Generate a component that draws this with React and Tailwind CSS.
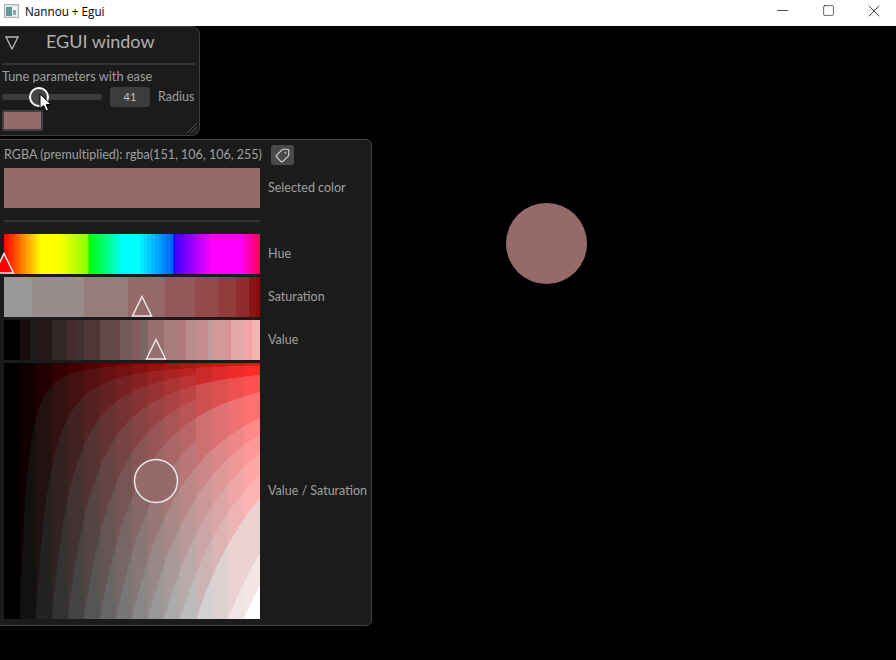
import React from 'react';
import { Minus, Square, X, Tag } from 'lucide-react';

const SWATCH = '#976a6a';

const satBands = [
  [0, 28, '#999999'], [28, 80, '#998c8c'], [80, 124, '#977c7c'], [124, 161, '#976a6a'],
  [161, 191, '#945858'], [191, 214, '#944a4a'], [214, 232, '#933c3c'], [232, 245, '#902c2c'],
  [245, 252, '#8c1616'], [252, 256, '#8a0c0c'],
];

const valBands = [
  [0, 16, '#000000'], [16, 26, '#180c0c'], [26, 32, '#1c1c1c'], [32, 48, '#261818'],
  [48, 63, '#332626'], [63, 72, '#472b2b'], [72, 80, '#3e3232'], [80, 96, '#523636'],
  [96, 112, '#634a4a'], [112, 116, '#6a4646'], [116, 128, '#745a5a'], [128, 137, '#865c5c'],
  [137, 144, '#7b6666'], [144, 160, '#986e6e'], [160, 176, '#a97c7c'], [176, 182, '#b47878'],
  [182, 193, '#b88c8c'], [193, 204, '#c48c8c'], [204, 208, '#c09c9c'], [208, 224, '#d49a9a'],
  [224, 227, '#e08e8e'], [227, 240, '#e4a8a8'], [240, 248, '#f4a4a4'], [248, 256, '#f8b4b4'],
];

const hueStops = [
  [0, 255, 0, 0], [37, 255, 255, 0], [54, 255, 255, 0], [84, 140, 255, 0], [85, 0, 255, 0],
  [119, 0, 255, 255], [134, 0, 255, 255], [169, 0, 96, 255], [170, 0, 0, 255], [171, 64, 0, 255],
  [208, 255, 0, 255], [236, 255, 0, 255], [256, 255, 0, 80],
];

// in the bright columns several bands collapse into one
const gLevels = [0, 16, 42, 42, 80, 80, 112, 112, 136, 152, 166, 180, 210, 210, 230, 255];

const quant = (v) => Math.round(v / 17) * 17;

function hueAt(x) {
  for (let i = 0; i < hueStops.length - 1; i++) {
    const a = hueStops[i];
    const b = hueStops[i + 1];
    if (x <= b[0]) {
      const t = (x - a[0]) / (b[0] - a[0]);
      const c = [1, 2, 3].map((n) => quant(a[n] + (b[n] - a[n]) * t));
      return `rgb(${c[0]},${c[1]},${c[2]})`;
    }
  }
  return '#ff0050';
}

function squareColor(x, y) {
  const rBand = Math.min(15, Math.floor(x * 16));
  const k = Math.min(15, Math.floor(x * Math.pow(y, 0.45) * 16));
  let r = rBand * 17;
  const g = rBand >= 12 ? gLevels[k] : k * 17;
  if (k === 12 || k === 13) r = Math.min(r, 235);
  if (k === 14) r = Math.min(r, 245);
  return `rgb(${Math.max(r, g)},${g},${g})`;
}

function buildSquare() {
  const paths = {};
  for (let row = 0; row < 256; row++) {
    const y = (row + 0.5) / 256;
    let start = 0;
    let prev = null;
    for (let col = 0; col <= 256; col++) {
      const key = col < 256 ? squareColor((col + 0.5) / 256, y) : null;
      if (key !== prev) {
        if (prev) {
          paths[prev] = (paths[prev] || '') + `M${start} ${row}h${col - start}v1h-${col - start}z`;
        }
        prev = key;
        start = col;
      }
    }
  }
  return Object.entries(paths);
}

const squarePaths = buildSquare();

function BandStrip({ bands }) {
  return (
    <svg width="256" height="40" className="block" shapeRendering="crispEdges">
      {bands.map(([a, b, c]) => (
        <rect key={a} x={a} y="0" width={b - a} height="40" fill={c} />
      ))}
    </svg>
  );
}

function HueStrip() {
  const cols = [];
  for (let x = 0; x < 256; x++) cols.push(x);
  return (
    <svg width="256" height="40" className="block" shapeRendering="crispEdges">
      {cols.map((x) => (
        <rect key={x} x={x} y="0" width="1" height="40" fill={hueAt(x + 0.5)} />
      ))}
    </svg>
  );
}

function Marker({ left, fill }) {
  return (
    <svg width="24" height="24" className="absolute bottom-0" style={{ left: left - 12 }}>
      <path d="M12 3.5 L21.5 23 L2.5 23 Z" fill={fill} stroke="#e6e6e6" strokeWidth="1.5" />
    </svg>
  );
}

function Row({ label, children, rowClass = 'h-10' }) {
  return (
    <div className={`flex items-center gap-2 ${rowClass}`}>
      <div className="relative w-[256px] h-full shrink-0">{children}</div>
      <span className="whitespace-nowrap">{label}</span>
    </div>
  );
}

function Cursor() {
  return (
    <svg width="14" height="20" viewBox="0 0 14 20" className="absolute left-[39px] top-[67px]">
      <path d="M1 1 L1 15.5 L4.6 12.4 L7 18 L9.5 17 L7.2 11.6 L12 11.4 Z" fill="#fff" stroke="#000" strokeWidth="1" />
    </svg>
  );
}

function TitleBar() {
  return (
    <div className="h-[26px] pb-[5px] bg-white flex items-center text-black shrink-0">
      <svg width="16" height="14" viewBox="0 0 16 14" className="ml-[4px] mr-[5px]">
        <rect x="0.5" y="0.5" width="14" height="13" fill="#dfe7ea" stroke="#aab4b8" />
        <rect x="2" y="3" width="6" height="9" fill="#5f9a9c" />
        <rect x="8" y="3" width="5" height="9" fill="#f2f6f7" />
        <rect x="9" y="6" width="3" height="5" fill="#8aa7a8" />
      </svg>
      <span className="text-[11.7px] font-['Open_Sans','Noto_Sans',sans-serif]">Nannou + Egui</span>
      <div className="ml-auto mr-[-1px] flex items-center">
        <div className="w-[45px] flex justify-center"><Minus size={17} strokeWidth={1} /></div>
        <div className="w-[46px] flex justify-center"><Square size={13} strokeWidth={1.1} /></div>
        <div className="w-[46px] flex justify-center"><X size={20} strokeWidth={0.9} /></div>
      </div>
    </div>
  );
}

function ParamsWindow() {
  return (
    <div className="absolute left-[-1px] top-0 w-[201px] h-[110px] bg-[#1b1b1b] border border-[#3c3c3c] rounded-lg rounded-tl-none rounded-bl-none pl-[2px] pr-[4px] flex flex-col">
      <div className="h-[36px] flex items-center shrink-0 relative">
        <svg width="14" height="14" viewBox="0 0 14 14" className="ml-[3px] mt-[-5px]">
          <path d="M1 1 H13 L7 13 Z" fill="none" stroke="#b4b4b4" strokeWidth="1.3" />
        </svg>
        <span className="absolute left-[44px] top-[6px] text-[18px] text-[#b0b0b0] font-['Lato',sans-serif] whitespace-nowrap">EGUI window</span>
      </div>
      <div className="h-[2px] bg-[#333333] shrink-0" />
      <div className="mt-[3px] text-[12.8px] leading-[16px] whitespace-nowrap">Tune parameters with ease</div>
      <div className="mt-[3px] h-[20px] flex items-center">
        <div className="relative w-[100px] h-[6px] rounded-full bg-[#3c3c3c]">
          <div className="absolute left-[27px] top-[-7px] w-[20px] h-[20px] rounded-full bg-[#444444] border-2 border-white" />
        </div>
        <div className="ml-2 w-[40px] h-[20px] rounded-[3px] bg-[#3c3c3c] flex items-center justify-center text-[11px] text-[#c0c0c0]">41</div>
        <span className="ml-2 whitespace-nowrap">Radius</span>
      </div>
      <div className="mt-[3px] w-[41px] h-[21px] border-2 border-[#404040] rounded-[2px] bg-[#976a6a]" />
      <svg width="12" height="12" className="absolute right-[1px] bottom-[1px]">
        <path d="M1 11 L11 1 M5 11 L11 5 M9 11 L11 9" stroke="#555555" strokeWidth="1" />
      </svg>
    </div>
  );
}

function ColorWindow() {
  return (
    <div className="absolute left-[-1px] top-[113px] w-[373px] h-[487px] bg-[#1b1b1b] border border-[#444444] rounded-md rounded-tl-none rounded-bl-none pl-[4px] pt-[5px] flex flex-col">
      <div className="h-[20px] flex items-center gap-[8px] whitespace-nowrap">
        <span className="w-[259px] tracking-[0.02px]">RGBA (premultiplied): rgba(151, 106, 106, 255)</span>
        <div className="w-[23px] h-[20px] rounded-[3px] bg-[#4a4a4a] flex items-center justify-center">
          <Tag size={15} strokeWidth={1.8} color="#d8d8d8" className="rotate-90" />
        </div>
      </div>
      <div className="mt-[3px]">
        <Row label="Selected color">
          <div className="w-full h-full bg-[#976a6a]" />
        </Row>
      </div>
      <div className="mt-[12px] w-[256px] h-[2px] bg-[#333333]" />
      <div className="mt-[12px] flex flex-col gap-[3px]">
        <Row label="Hue">
          <HueStrip />
          <Marker left={0} fill="#ff0000" />
        </Row>
        <Row label="Saturation">
          <BandStrip bands={satBands} />
          <Marker left={138} fill="none" />
        </Row>
        <Row label="Value">
          <BandStrip bands={valBands} />
          <Marker left={152} fill="none" />
        </Row>
        <Row label="Value / Saturation" rowClass="h-[256px]">
          <svg width="256" height="256" className="block" shapeRendering="crispEdges">
            {squarePaths.map(([c, d]) => (
              <path key={c} d={d} fill={c} />
            ))}
            <circle cx="152" cy="118" r="21.5" fill={SWATCH} stroke="#ececec" strokeWidth="1.5" shapeRendering="auto" />
          </svg>
        </Row>
      </div>
    </div>
  );
}

export default function App() {
  return (
    <div className="w-[896px] h-[660px] flex flex-col bg-black overflow-hidden text-[12.5px] leading-[16px] text-[#a0a0a0] font-['Lato',sans-serif]">
      <TitleBar />
      <div className="relative flex-1">
        <ParamsWindow />
        <ColorWindow />
        <Cursor />
        <div className="absolute left-[506px] top-[177px] w-[81px] h-[81px] rounded-full bg-[#976a6a]" />
      </div>
    </div>
  );
}
